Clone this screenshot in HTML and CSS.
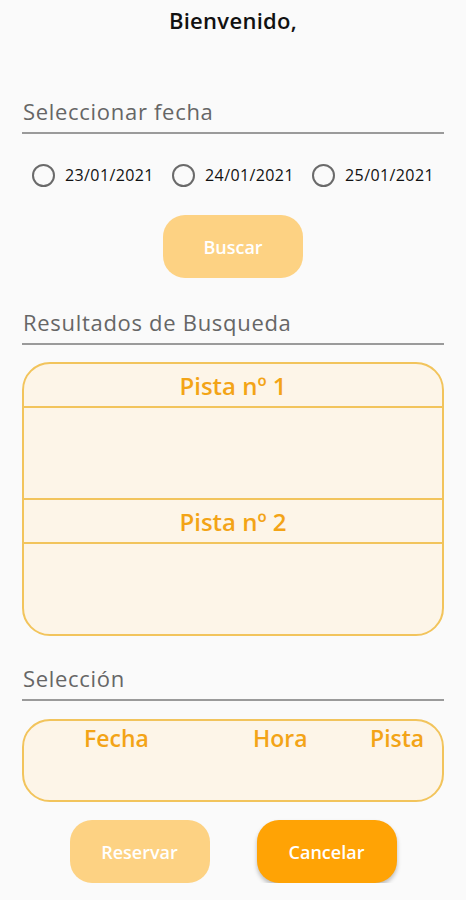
FILE: index.html
```html
<!DOCTYPE html>
<html lang="es">
<head>
  <meta charset="UTF-8" />
  <meta name="viewport" content="width=device-width, initial-scale=1.0">
  <title>Reservas</title>
  <link rel="stylesheet" href="styles.css">
</head>
<body>
  <h2 class="welcome">Bienvenido,</h2>

  <div class="section-label first">Seleccionar fecha</div>

  <div class="dates">
    <label class="date-option"><span class="radio"></span>23/01/2021</label>
    <label class="date-option"><span class="radio"></span>24/01/2021</label>
    <label class="date-option"><span class="radio"></span>25/01/2021</label>
  </div>

  <div class="center-row">
    <button type="button" class="btn btn-light">Buscar</button>
  </div>

  <div class="section-label">Resultados de Busqueda</div>

  <div class="results">
    <div class="court-title">Pista nº 1</div>
    <div class="court-body"></div>
    <div class="court-title">Pista nº 2</div>
    <div class="court-body last"></div>
  </div>

  <div class="section-label tight">Selección</div>

  <div class="selection">
    <span>Fecha</span>
    <span>Hora</span>
    <span>Pista</span>
  </div>

  <div class="actions">
    <button type="button" class="btn btn-light">Reservar</button>
    <button type="button" class="btn btn-strong">Cancelar</button>
  </div>
</body>
</html>
```

FILE: styles.css
```css
* {
  box-sizing: border-box;
}
body {
  margin: 0;
  padding: 0 22px;
  background: #fafafa;
  color: #111;
  font-family: "Open Sans", "Noto Sans", sans-serif;
}
.welcome {
  margin: 5px 0 0;
  text-align: center;
  font-size: 22px;
  line-height: 30px;
  font-weight: 600;
  letter-spacing: 0.3px;
}
.section-label {
  margin-top: 29px;
  padding: 1px 1px 6px;
  font-size: 22px;
  line-height: 29px;
  letter-spacing: 0.7px;
  color: #666;
  border-bottom: 2px solid #9a9a9a;
}
.section-label.first {
  margin-top: 61px;
}
.section-label.tight {
  margin-top: 27px;
}
.dates {
  display: flex;
  justify-content: space-between;
  padding: 0 10px 0 10px;
  margin-top: 29px;
}
.date-option {
  display: flex;
  align-items: center;
  gap: 10px;
  font-size: 16px;
  line-height: 24px;
  font-weight: 500;
  letter-spacing: 0.4px;
}
.radio {
  width: 23px;
  height: 23px;
  border: 2px solid #6a6a6a;
  border-radius: 50%;
}
.center-row {
  display: flex;
  justify-content: center;
  margin-top: 28px;
}
.btn {
  width: 140px;
  height: 63px;
  border: none;
  border-radius: 22px;
  color: #fff;
  font-family: inherit;
  font-size: 18px;
  font-weight: 600;
}
.btn-light {
  background: #fdd283;
}
.btn-strong {
  background: #ffa305;
  box-shadow: 0 3px 4px rgba(0, 0, 0, 0.25);
}
.results {
  margin-top: 17px;
  border: 2px solid #f2c45c;
  border-radius: 28px;
  background: #fdf5e8;
  overflow: hidden;
}
.court-title {
  height: 44px;
  padding-top: 5px;
  text-align: center;
  font-size: 24px;
  line-height: 34px;
  font-weight: 600;
  color: #f3a417;
  border-bottom: 2px solid #f2c45c;
}
.court-body {
  height: 92px;
  border-bottom: 2px solid #f2c45c;
}
.court-body.last {
  border-bottom: none;
  height: 90px;
}
.selection {
  margin-top: 18px;
  height: 83px;
  padding: 1px 0 0 60px;
  display: grid;
  grid-template-columns: 169px 117px auto;
  align-items: start;
  border: 2px solid #f2c45c;
  border-radius: 28px;
  background: #fdf5e8;
  font-size: 23px;
  line-height: 32px;
  font-weight: 600;
  color: #f3a417;
}
.actions {
  display: flex;
  justify-content: center;
  gap: 47px;
  margin-top: 18px;
}
```
